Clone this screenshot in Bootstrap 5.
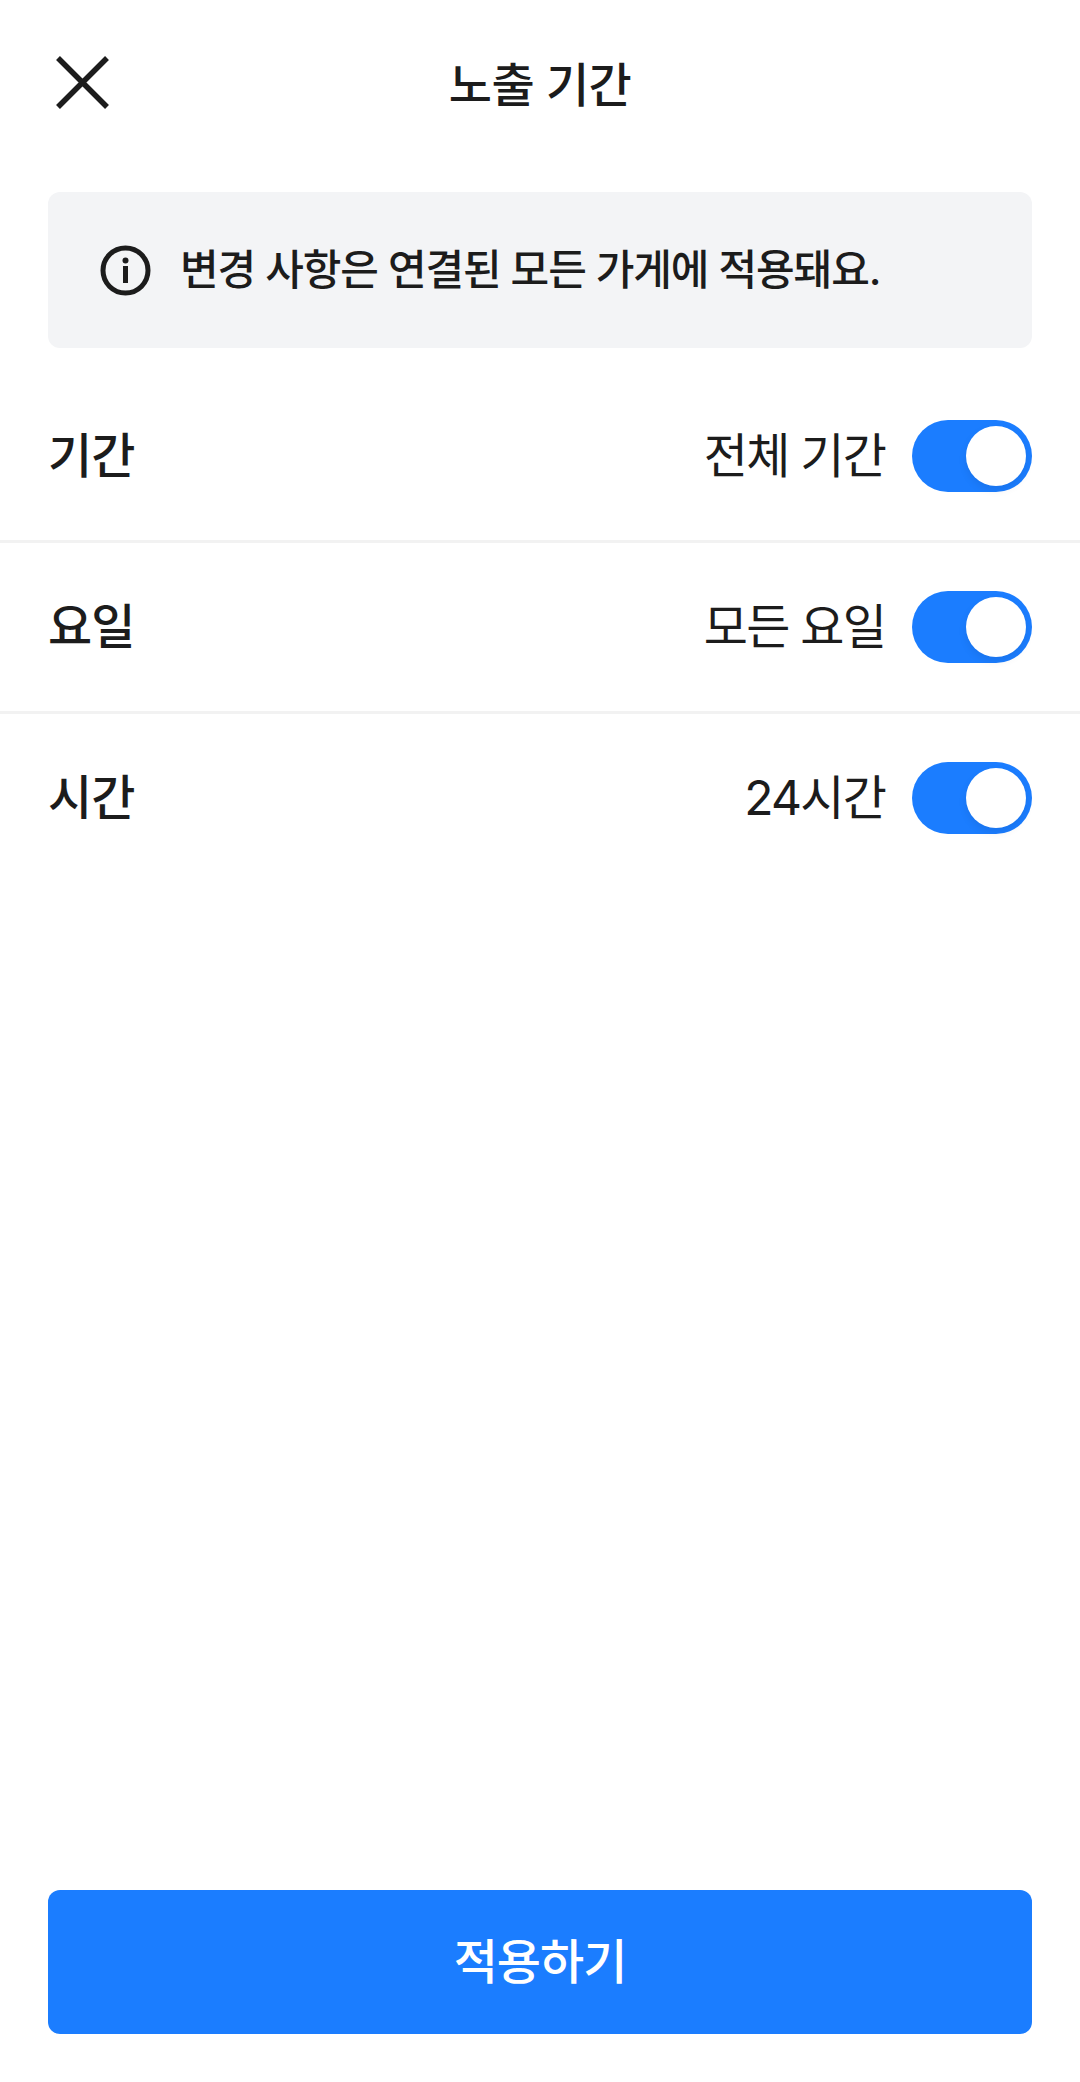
<!DOCTYPE html>
<html lang="ko">
<head>
<meta charset="utf-8">
<title>노출 기간</title>
<link href="https://cdn.jsdelivr.net/npm/bootstrap@5.3.0/dist/css/bootstrap.min.css" rel="stylesheet">
<style>
html, body { height: 100%; }
body { font-family: "Inter", "Noto Sans CJK KR", "Liberation Sans", sans-serif; color: #1c1c1c; background: #fff; }
.screen { height: 2082px; }
.topbar { height: 168px; padding: 0 48px; }
.close-btn { left: 48px; top: 48px; width: 69px; height: 69px; }
.page-title { font-size: 47px; font-weight: 500; letter-spacing: -.6px; line-height: 1; }
.notice { height: 156px; margin: 24px 48px; padding: 0 52px; background: #f3f4f6; border-radius: 12px; gap: 29px; }
.notice-text { font-size: 42px; font-weight: 500; letter-spacing: -1.1px; line-height: 1; }
.set-row { height: 171px; padding: 0 48px; border-bottom: 3px solid #f2f2f2; }
.set-row.is-last { border-bottom-color: transparent; }
.row-label { font-size: 48px; font-weight: 500; letter-spacing: -1px; line-height: 1; }
.row-value { font-size: 48px; font-weight: 400; letter-spacing: -1.8px; line-height: 1; margin-right: 27px; }
.switch-track { width: 120px; height: 72px; border-radius: 36px; background: #1b7dff; }
.switch-knob { top: 6px; right: 6px; width: 60px; height: 60px; background: #fff; border-radius: 50%; box-shadow: 0 4px 8px rgba(0,0,0,.08); }
.apply-btn { height: 144px; margin: 0 48px 48px; background: #1b7dff; border: 0; border-radius: 12px; color: #fff; font-size: 48px; font-weight: 500; letter-spacing: -1px; }
.apply-btn:hover { background: #1b7dff; color: #fff; }
</style>
</head>
<body>
<div class="screen d-flex flex-column">
  <header class="topbar position-relative d-flex align-items-center justify-content-center">
    <svg class="close-btn position-absolute" viewBox="0 0 69 69" fill="none" stroke="#1c1c1c" stroke-width="5.5" aria-label="닫기"><path d="M10 10 59 59M59 10 10 59"/></svg>
    <div class="page-title">노출 기간</div>
  </header>
  <div class="notice d-flex align-items-center">
    <svg width="51" height="51" viewBox="0 0 51 51" fill="none" class="flex-shrink-0"><circle cx="25.5" cy="25.5" r="22.5" stroke="#1c1c1c" stroke-width="5"/><circle cx="25.5" cy="15.5" r="3" fill="#1c1c1c"/><rect x="23" y="21" width="5" height="17" fill="#1c1c1c"/></svg>
    <div class="notice-text">변경 사항은 연결된 모든 가게에 적용돼요.</div>
  </div>
  <div class="set-row d-flex align-items-center justify-content-between">
    <div class="row-label">기간</div>
    <div class="d-flex align-items-center"><span class="row-value">전체 기간</span><span class="switch-track position-relative d-block"><span class="switch-knob position-absolute d-block"></span></span></div>
  </div>
  <div class="set-row d-flex align-items-center justify-content-between">
    <div class="row-label">요일</div>
    <div class="d-flex align-items-center"><span class="row-value">모든 요일</span><span class="switch-track position-relative d-block"><span class="switch-knob position-absolute d-block"></span></span></div>
  </div>
  <div class="set-row is-last d-flex align-items-center justify-content-between">
    <div class="row-label">시간</div>
    <div class="d-flex align-items-center"><span class="row-value">24시간</span><span class="switch-track position-relative d-block"><span class="switch-knob position-absolute d-block"></span></span></div>
  </div>
  <button type="button" class="btn apply-btn mt-auto">적용하기</button>
</div>
<script src="https://cdn.jsdelivr.net/npm/bootstrap@5.3.0/dist/js/bootstrap.bundle.min.js"></script>
</body>
</html>
